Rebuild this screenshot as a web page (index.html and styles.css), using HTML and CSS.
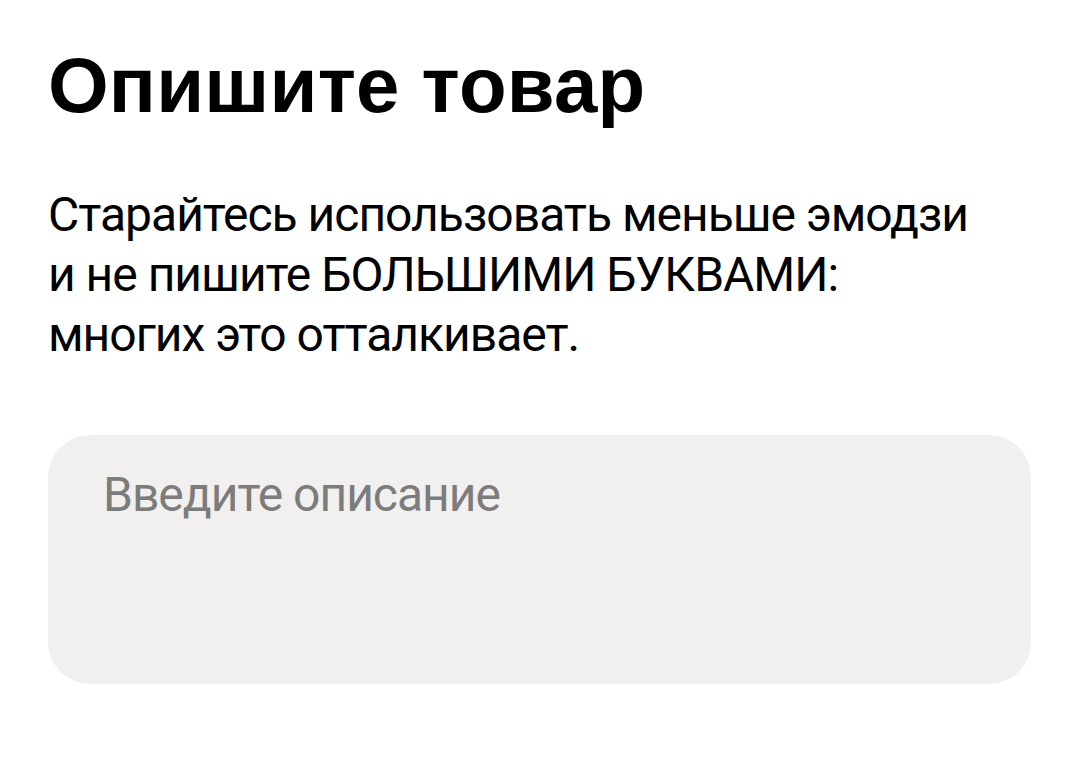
FILE: index.html
```html
<!DOCTYPE html>
<html lang="ru">
<head>
<meta charset="utf-8">
<link rel="stylesheet" href="styles.css">
</head>
<body>
<main class="page">
  <h1 class="title">Опишите товар</h1>
  <p class="hint">Старайтесь использовать меньше эмодзи<br>и не пишите БОЛЬШИМИ БУКВАМИ:<br>многих это отталкивает.</p>
  <div class="field">
    <span class="placeholder">Введите описание</span>
  </div>
</main>
</body>
</html>
```
FILE: styles.css
```css
html, body {
  margin: 0;
  padding: 0;
  background: #ffffff;
}
.page {
  padding: 40px 49px 0 48px;
  font-family: Roboto, "Noto Sans", sans-serif;
  color: #000;
}
.title {
  margin: 0;
  font-family: "Liberation Sans", Arial, sans-serif;
  font-size: 78px;
  font-weight: 700;
  line-height: 90px;
  letter-spacing: 0.2px;
}
.hint {
  margin: 55px 0 0 0;
  font-size: 48px;
  font-weight: 400;
  line-height: 60px;
  letter-spacing: -1px;
}
.field {
  margin-top: 70px;
  height: 249px;
  background: #f1f0ef;
  border-radius: 42px;
  padding: 30px 55px;
  box-sizing: border-box;
}
.placeholder {
  font-size: 48px;
  line-height: 59px;
  color: #7c7c7c;
  letter-spacing: -1px;
}
```
